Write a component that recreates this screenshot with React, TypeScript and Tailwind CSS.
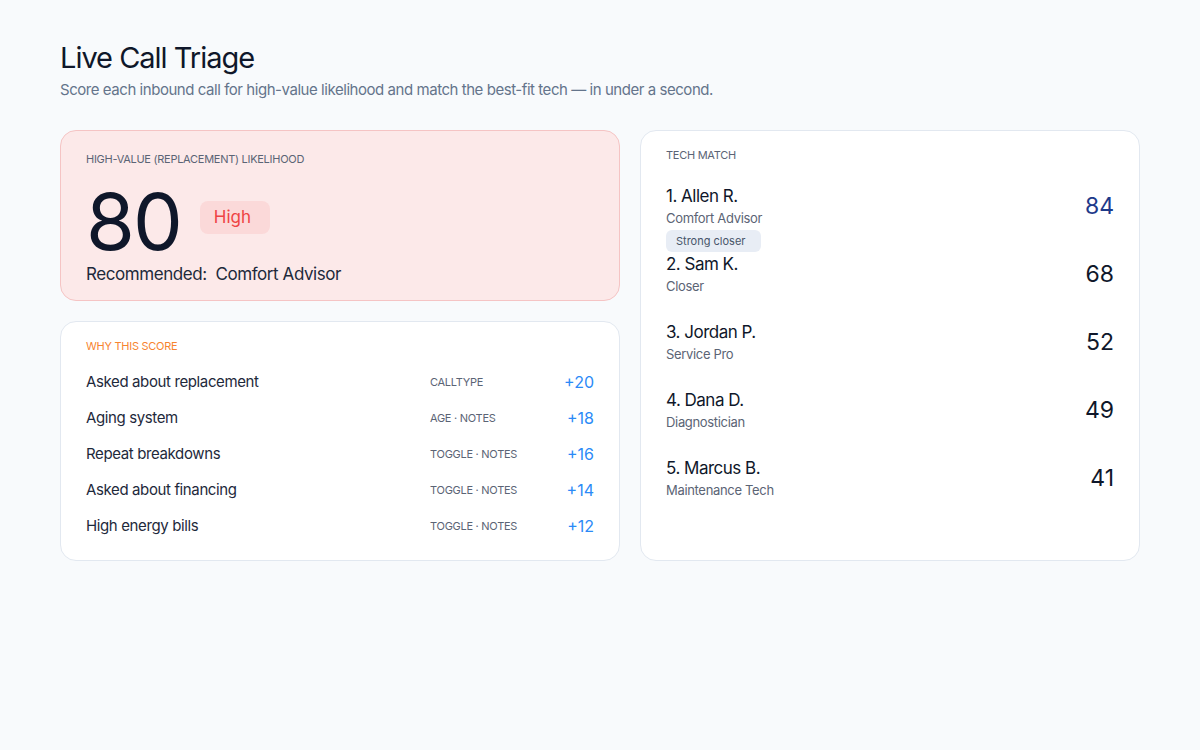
import React from 'react';

interface Reason {
  label: string;
  source: string;
  points: number;
}

interface Tech {
  name: string;
  role: string;
  score: number;
  tag?: string;
}

const reasons: Reason[] = [
  { label: 'Asked about replacement', source: 'CALLTYPE', points: 20 },
  { label: 'Aging system', source: 'AGE · NOTES', points: 18 },
  { label: 'Repeat breakdowns', source: 'TOGGLE · NOTES', points: 16 },
  { label: 'Asked about financing', source: 'TOGGLE · NOTES', points: 14 },
  { label: 'High energy bills', source: 'TOGGLE · NOTES', points: 12 },
];

const techs: Tech[] = [
  { name: 'Allen R.', role: 'Comfort Advisor', score: 84, tag: 'Strong closer' },
  { name: 'Sam K.', role: 'Closer', score: 68 },
  { name: 'Jordan P.', role: 'Service Pro', score: 52 },
  { name: 'Dana D.', role: 'Diagnostician', score: 49 },
  { name: 'Marcus B.', role: 'Maintenance Tech', score: 41 },
];

function ScoreCard() {
  return (
    <div className="rounded-2xl border border-[#f5c4c4] bg-[#fce9e9] px-[25px] pt-[20px] pb-[14px]">
      <div className="text-[11px] leading-4 uppercase text-[#5b6475] tracking-tight">
        High-value (replacement) likelihood
      </div>
      <div className="mt-[18px] flex items-start">
        <span className="text-[79px] leading-[72px] text-[#0f172a] tracking-tight">80</span>
        <span className="ml-[19px] mt-4 flex h-[33px] w-[70px] items-center rounded-lg bg-[#fbd9d9] pl-[14px] text-[17px] text-[#ef4444]">
          High
        </span>
      </div>
      <div className="mt-[5px] text-[17px] leading-6 text-[#1e293b] tracking-tight">
        Recommended:&nbsp; Comfort Advisor
      </div>
    </div>
  );
}

function ReasonsCard() {
  return (
    <div className="flex-1 rounded-2xl border border-[#e2e8f0] bg-white px-[25px] pt-[16px] pb-4">
      <div className="text-[11px] leading-4 uppercase text-[#f7842f] tracking-tight">Why this score</div>
      <div className="mt-[10px]">
        {reasons.map((r) => (
          <div key={r.label} className="grid h-9 grid-cols-[344px_1fr_auto] items-center">
            <span className="text-[15px] text-[#1e293b] tracking-tight">{r.label}</span>
            <span className="text-[11px] text-[#5b6475] tracking-tight">{r.source}</span>
            <span className="text-[16px] text-[#2b8af7]">+{r.points}</span>
          </div>
        ))}
      </div>
    </div>
  );
}

function TechMatchCard() {
  return (
    <div className="rounded-2xl border border-[#e2e8f0] bg-white px-[25px] pt-[16px]">
      <div className="text-[11px] leading-4 uppercase text-[#5b6475] tracking-tight">Tech match</div>
      <div className="mt-[21px]">
        {techs.map((t, i) => (
          <div key={t.name} className="flex h-[68px] items-start justify-between">
            <div>
              <div className="text-[17px] leading-6 text-[#0f172a] tracking-[-0.03em]">
                {i + 1}. {t.name}
              </div>
              <div className="text-[13px] leading-5 text-[#5b6475] tracking-tight">{t.role}</div>
              {t.tag && (
                <div className="mt-[2px] flex h-[22px] w-[95px] items-center rounded-md bg-[#e8edf5] px-[10px] text-[11px] text-[#475569]">
                  {t.tag}
                </div>
              )}
            </div>
            <div
              className={
                'flex h-11 items-center text-[23px] ' +
                (i === 0 ? 'text-[#1e3a8a]' : 'text-[#0f172a]')
              }
            >
              {t.score}
            </div>
          </div>
        ))}
      </div>
    </div>
  );
}

export default function App() {
  return (
    <div
      className="min-h-[750px] bg-[#f8fafc] px-[60px] pt-[38px]"
      style={{ fontFamily: 'Inter, "Liberation Sans", sans-serif' }}
    >
      <h1 className="text-[29px] leading-10 text-[#0f172a] tracking-[-0.035em]">Live Call Triage</h1>
      <p className="text-[15px] leading-6 text-[#64748b] tracking-[-0.03em]">
        Score each inbound call for high-value likelihood and match the best-fit tech — in under a second.
      </p>

      <div className="mt-[28px] grid grid-cols-[560px_500px] gap-5">
        <div className="flex flex-col gap-5">
          <ScoreCard />
          <ReasonsCard />
        </div>
        <TechMatchCard />
      </div>
    </div>
  );
}
